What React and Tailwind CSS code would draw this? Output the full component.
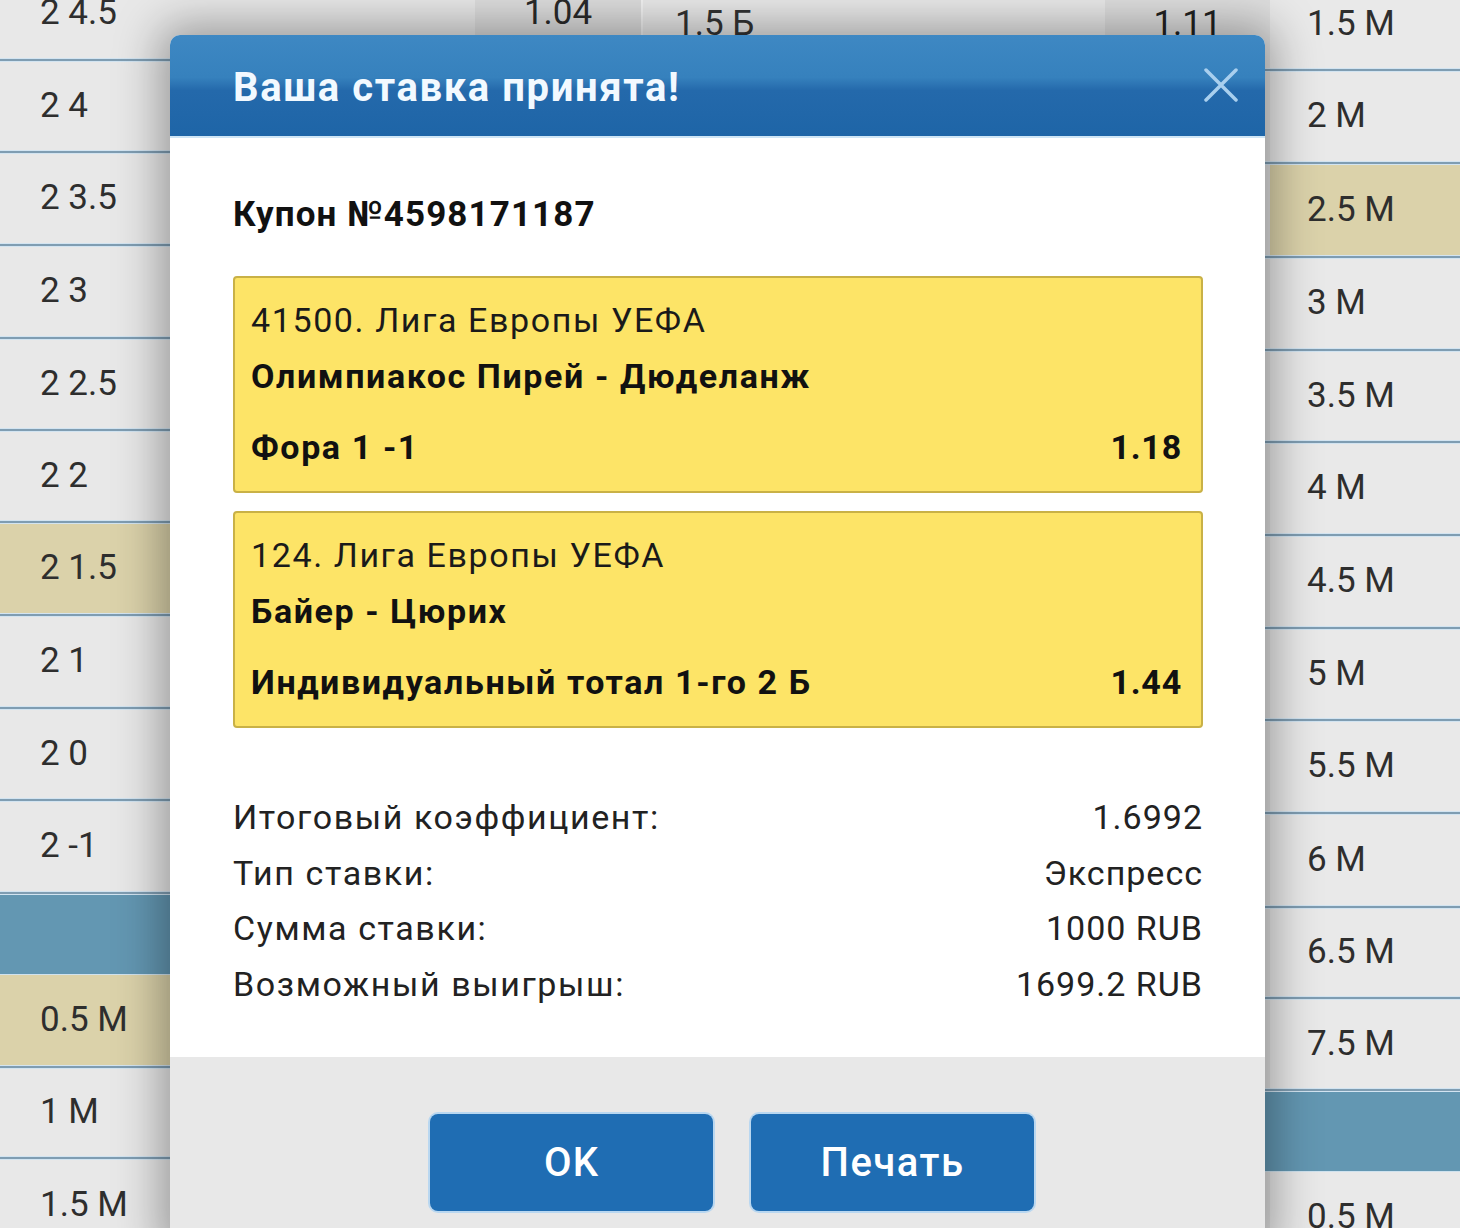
import React from "react";

const leftRows = [
  { t: "2 4.5", h: "h-[90px]", odds: "1.04" },
  { t: "2 4", h: "h-[88px]" },
  { t: "2 3.5", h: "h-[89px]" },
  { t: "2 3", h: "h-[89px]" },
  { t: "2 2.5", h: "h-[88px]" },
  { t: "2 2", h: "h-[88px]" },
  { t: "2 1.5", h: "h-[89px]", tan: true },
  { t: "2 1", h: "h-[89px]" },
  { t: "2 0", h: "h-[88px]" },
  { t: "2 -1", h: "h-[89px]" },
  { band: true, h: "h-[80px]" },
  { t: "0.5 М", h: "h-[90px]", tan: true },
  { t: "1 М", h: "h-[87px]" },
  { t: "1.5 М", h: "h-[90px]" },
];

const rightRows = [
  { t: "1.5 М", h: "h-[88px]", odds: "1.11", mid: "1.5 Б" },
  { t: "2 М", h: "h-[89px]" },
  { t: "2.5 М", h: "h-[90px]", tan: true },
  { t: "3 М", h: "h-[89px]" },
  { t: "3.5 М", h: "h-[88px]" },
  { t: "4 М", h: "h-[89px]" },
  { t: "4.5 М", h: "h-[89px]" },
  { t: "5 М", h: "h-[88px]" },
  { t: "5.5 М", h: "h-[89px]" },
  { t: "6 М", h: "h-[90px]" },
  { t: "6.5 М", h: "h-[87px]" },
  { t: "7.5 М", h: "h-[88px]" },
  { band: true, h: "h-[80px]" },
  { t: "0.5 М", h: "h-[90px]" },
];

function Divider() {
  return <div className="h-[4px] shrink-0 bg-[#7f9db2] border-y border-[#d2e4f1]" />;
}

function Band({ h }) {
  return <div className={`${h} shrink-0 bg-[#6397b2] border-b border-[#cfe2ee]`} />;
}

function LeftTable() {
  return (
    <div className="w-[643px] shrink-0 flex flex-col mt-[-32px]">
      {leftRows.map((r, i) => {
        if (r.band) return <Band key={i} h={r.h} />;
        const next = leftRows[i + 1];
        return (
          <React.Fragment key={i}>
            <div className={`${r.h} shrink-0 flex ${r.tan ? "bg-[#dbd2aa]" : "bg-[#e8e8e8]"}`}>
              <div className="w-[475px] flex items-center pl-[40px] text-[35px] text-[#2e2e2e]">{r.t}</div>
              <div className={`w-[168px] flex items-center justify-center text-[35px] text-[#2a2a2a] border-r-2 border-[#f3f3f3] ${r.tan ? "" : "bg-[#dddddd]"}`}>
                {r.odds}
              </div>
            </div>
            {next && <Divider />}
          </React.Fragment>
        );
      })}
    </div>
  );
}

function RightTable() {
  return (
    <div className="flex-1 flex flex-col mt-[-20px]">
      {rightRows.map((r, i) => {
        if (r.band) return <Band key={i} h={r.h} />;
        const next = rightRows[i + 1];
        return (
          <React.Fragment key={i}>
            <div className={`${r.h} shrink-0 flex ${r.tan ? "bg-[#dbd2aa]" : "bg-[#e9e9e9]"}`}>
              <div className="w-[462px] flex items-center pl-[32px] text-[35px] text-[#333]">{r.mid}</div>
              <div className="w-[165px] flex items-center justify-center text-[35px] text-[#222] bg-[#dedede]">{r.odds}</div>
              <div className="flex-1 flex items-center pl-[37px] text-[35px] text-[#2e2e2e]">{r.t}</div>
            </div>
            {next && <Divider />}
          </React.Fragment>
        );
      })}
    </div>
  );
}

function Card({ league, match, bet, odd }) {
  return (
    <div className="border-2 border-[#c9b146] bg-[#fde467] rounded-[4px] pl-[16px] pr-[19px] pt-[14px] pb-[16px]">
      <div className="leading-[56px] h-[56px] text-[34px] text-[#1a1a1a] tracking-[1.6px]">{league}</div>
      <div className="leading-[56px] h-[56px] text-[34px] font-bold text-[#111] tracking-[1.6px]">{match}</div>
      <div className="mt-[15px] leading-[56px] h-[56px] flex justify-between text-[34px] font-bold text-[#111] tracking-[1.6px]">
        <span>{bet}</span>
        <span className="tracking-[0.8px]">{odd}</span>
      </div>
    </div>
  );
}

function Summary({ label, value }) {
  return (
    <div className="flex justify-between leading-[55.5px] h-[55.5px] text-[34px] text-[#222] tracking-[1.6px]">
      <span>{label}</span>
      <span className="tracking-[1px]">{value}</span>
    </div>
  );
}

export default function App() {
  return (
    <div className="relative w-[1460px] h-[1228px] overflow-hidden bg-[#e8e8e8] font-[Roboto,sans-serif]">
      <div className="flex w-full">
        <LeftTable />
        <RightTable />
      </div>

      <div className="absolute left-[170px] top-[35px] w-[1095px] h-[1210px] flex flex-col bg-white rounded-t-[10px] overflow-hidden shadow-[0_0_45px_10px_rgba(0,0,0,0.34)]">
        <div className="h-[103px] shrink-0 flex items-center justify-between pl-[63px] pr-[27px] bg-[linear-gradient(to_bottom,#3e88c3_0%,#3681bd_42%,#2469ab_55%,#1e65a7_100%)] border-b-2 border-[#cfe6f6]">
          <div className="pt-[5px] text-[40px] font-bold text-[#f2f9ff] tracking-[1.6px]">Ваша ставка принята!</div>
          <svg width="34" height="34" viewBox="0 0 34 34" className="mt-[-2px]">
            <path d="M2 2 L32 32 M32 2 L2 32" stroke="#a9cfee" strokeWidth="3.5" strokeLinecap="round" />
          </svg>
        </div>

        <div className="shrink-0 pl-[63px] pr-[62px] pt-[57px] pb-[45px]">
          <div className="h-[40px] leading-[40px] text-[35px] font-bold text-[#111] tracking-[1.1px]">Купон №4598171187</div>
          <div className="mt-[41px]">
            <Card league="41500. Лига Европы УЕФА" match="Олимпиакос Пирей - Дюделанж" bet="Фора 1 -1" odd="1.18" />
          </div>
          <div className="mt-[18px]">
            <Card league="124. Лига Европы УЕФА" match="Байер - Цюрих" bet="Индивидуальный тотал 1-го 2 Б" odd="1.44" />
          </div>
          <div className="mt-[62px]">
            <Summary label="Итоговый коэффициент:" value="1.6992" />
            <Summary label="Тип ставки:" value="Экспресс" />
            <Summary label="Сумма ставки:" value="1000 RUB" />
            <Summary label="Возможный выигрыш:" value="1699.2 RUB" />
          </div>
        </div>

        <div className="flex-1 bg-[#e8e8e8] pl-[260px] pt-[57px] flex gap-[38px] items-start">
          <button className="w-[283px] h-[97px] rounded-[8px] bg-[#1f6db3] ring-2 ring-[#b9d7f0] text-white text-[40px] font-medium tracking-[1px]">OK</button>
          <button className="w-[283px] h-[97px] rounded-[8px] bg-[#1f6db3] ring-2 ring-[#b9d7f0] text-white text-[40px] font-medium tracking-[1.5px]">Печать</button>
        </div>
      </div>
    </div>
  );
}
